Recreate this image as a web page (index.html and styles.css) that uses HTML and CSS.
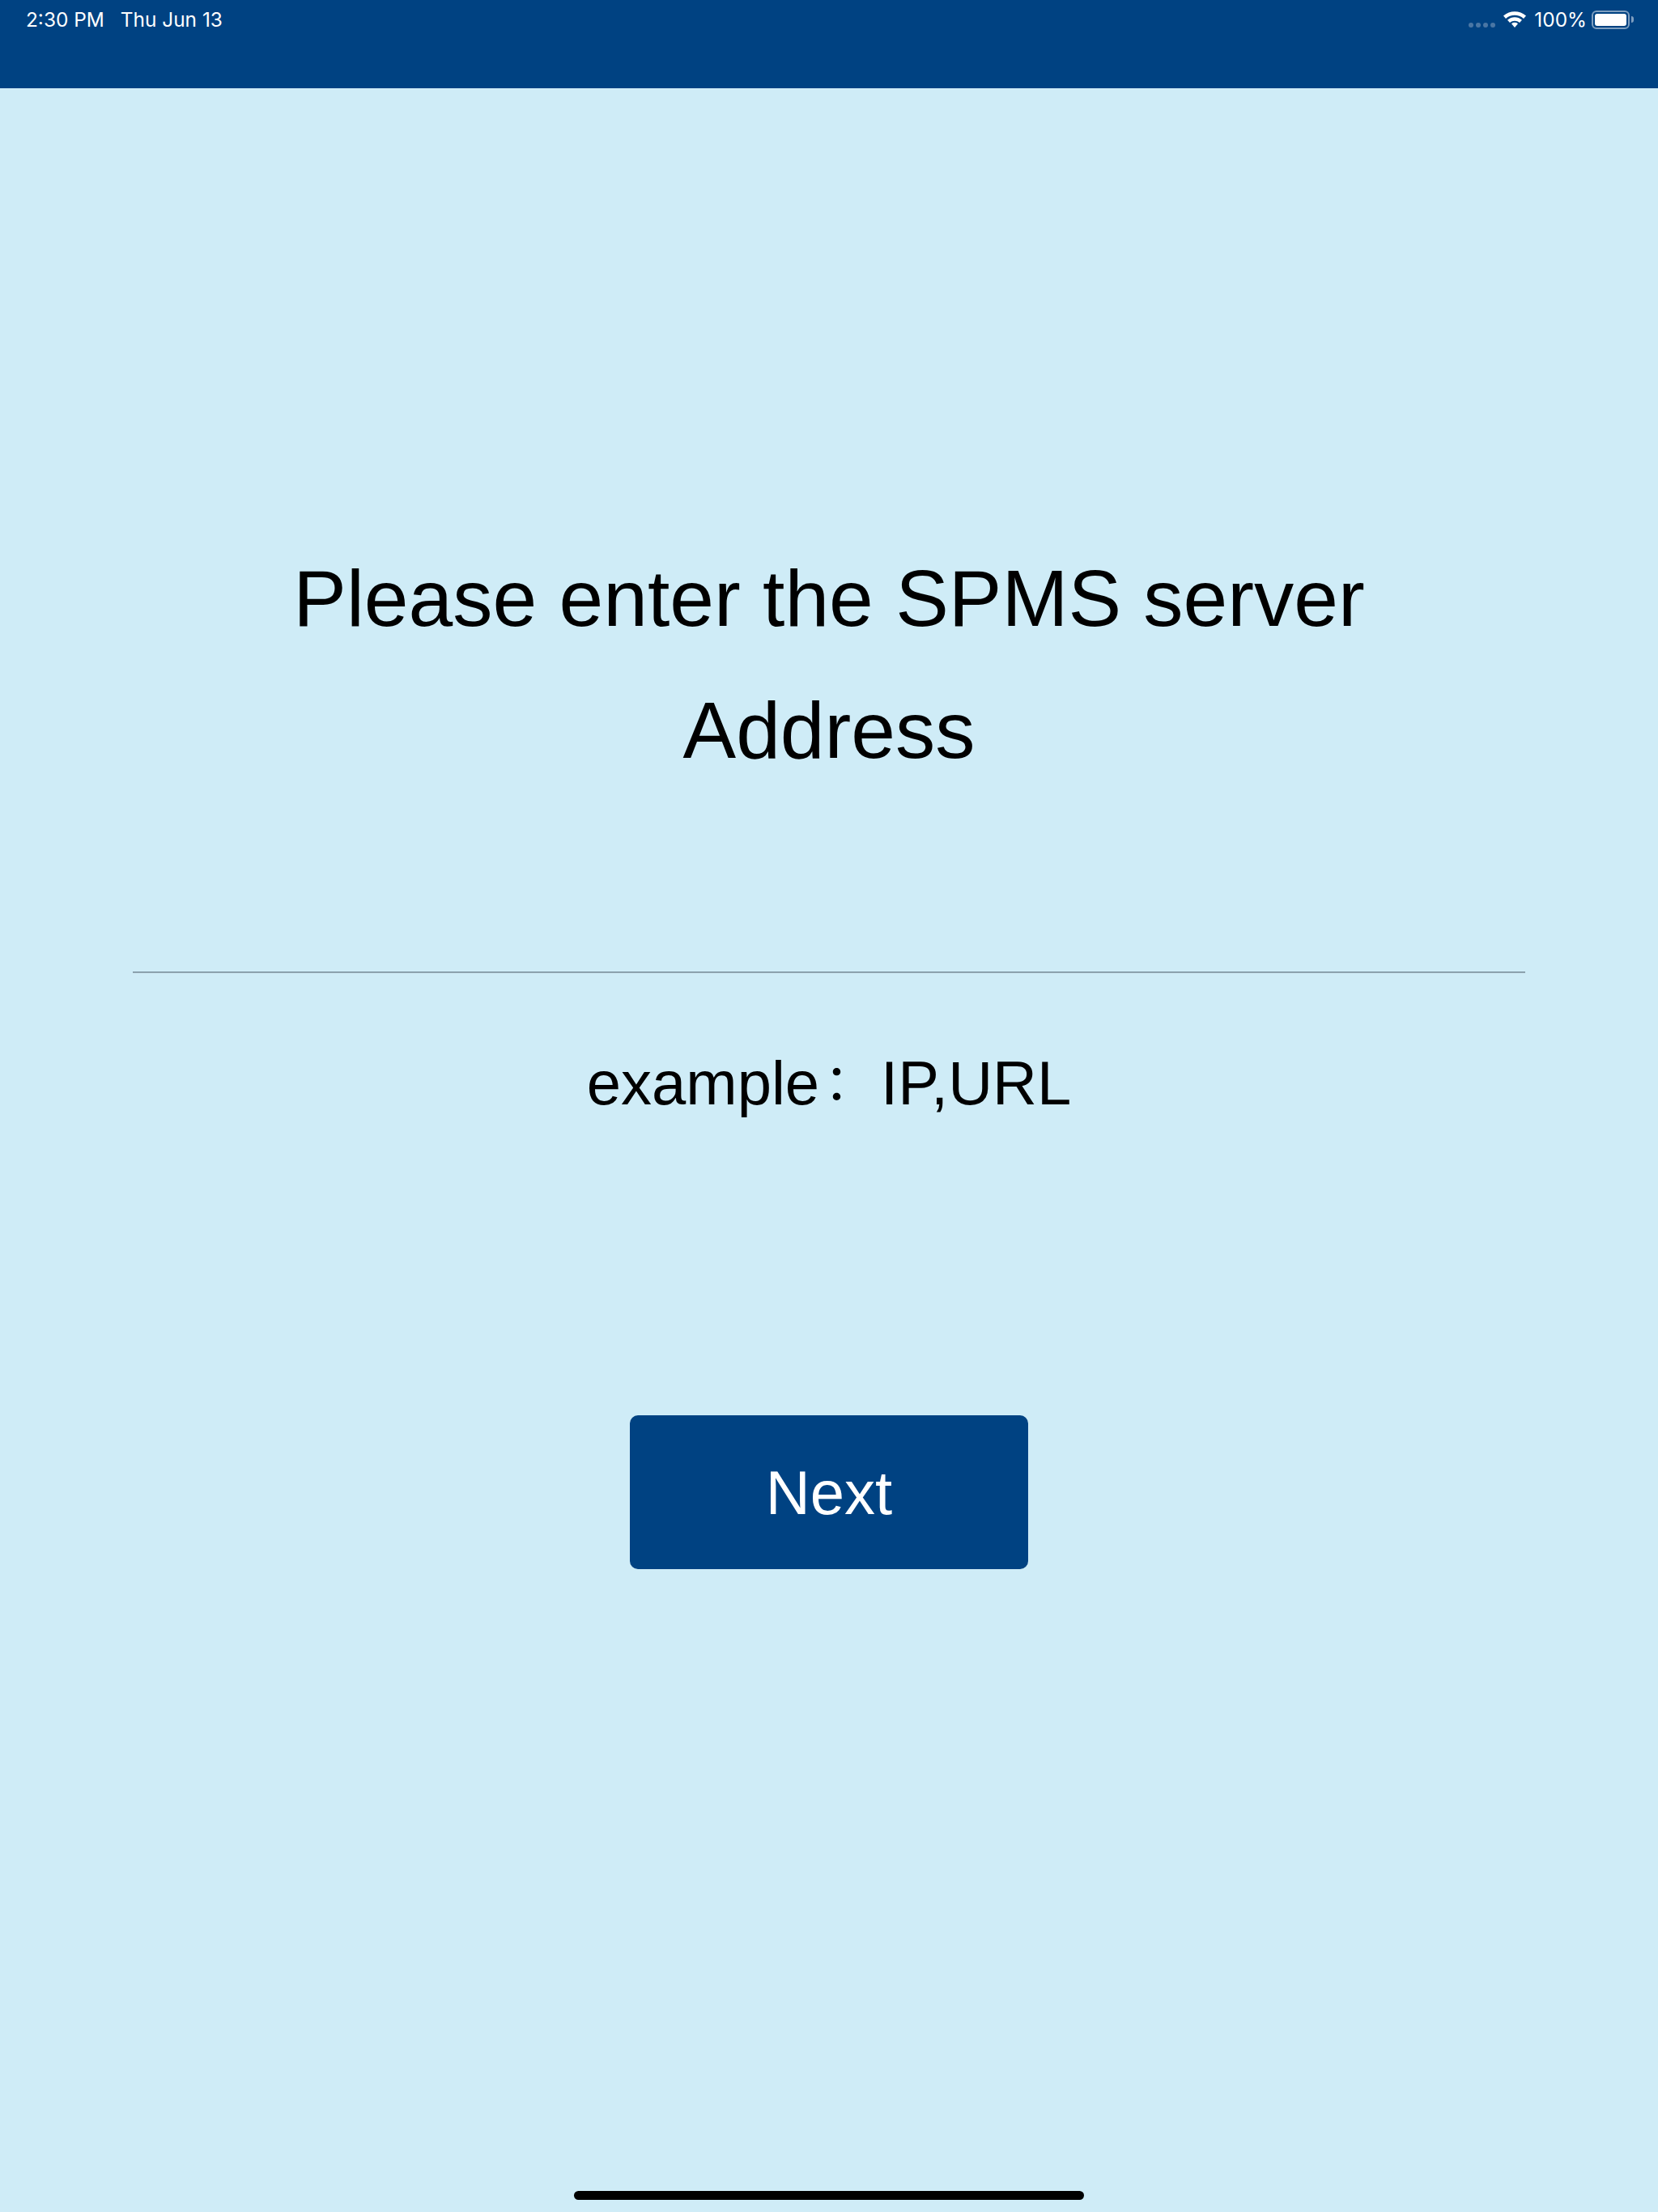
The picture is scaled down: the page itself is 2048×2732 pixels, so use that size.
FILE: index.html
```html
<!DOCTYPE html>
<html lang="en">

<head>
    <meta charset="UTF-8">
    <meta name="viewport" content="width=device-width, initial-scale=1.0">
    <title>SPMS server</title>
    <link rel="stylesheet" href="styles.css">
</head>

<body>
    <div class="container">
        <div class="topbar">
            <div class="status-left">
                <span>2:30 PM</span>
                <span>Thu Jun 13</span>
            </div>
            <div class="status-right">
                <div class="signal">
                    <i></i><i></i><i></i><i></i>
                </div>
                <svg class="wifi" viewBox="0 0 28 20" width="28" height="20">
                    <path d="M0 5.6 C8 -1.6 20 -1.6 28 5.6 L25 9 C18.6 3.4 9.4 3.4 3 9 Z" fill="#fff" />
                    <path d="M5 10.8 C10.4 6.2 17.6 6.2 23 10.8 L20 14 C16.4 11 11.6 11 8 14 Z" fill="#fff" />
                    <path d="M10 15.2 C12.4 13.4 15.6 13.4 18 15.2 L14 20 Z" fill="#fff" />
                </svg>
                <span class="percent">100%</span>
                <div class="battery">
                    <div class="battery-body">
                        <div class="battery-fill"></div>
                    </div>
                    <div class="battery-tip"></div>
                </div>
            </div>
        </div>

        <div class="content">
            <h1 class="title">Please enter the SPMS server<br>Address</h1>
            <div class="address">
                <div class="line"></div>
                <p class="example">example<span class="colon">：</span>IP,URL</p>
            </div>
            <button class="next">Next</button>
        </div>

        <div class="homebar"></div>
    </div>
</body>

</html>
```

FILE: styles.css
```css
* {
    box-sizing: border-box;
}

body {
    margin: 0;
    font-family: "Liberation Sans", "Noto Sans CJK SC", sans-serif;
}

.container {
    display: flex;
    flex-direction: column;
    height: 2732px;
    background-color: #cfecf7;
}

.topbar {
    display: flex;
    justify-content: space-between;
    align-items: flex-start;
    height: 109px;
    padding: 9px 30px 0 32px;
    background-color: #004282;
    color: #fff;
    font-family: Inter, sans-serif;
    font-size: 24.4px;
    line-height: 30px;
}

.status-left {
    display: flex;
    gap: 20px;
}

.status-right {
    display: flex;
    align-items: center;
}

.signal {
    display: flex;
    gap: 3px;
    margin: 13px 10px 0 0;
}

.signal i {
    width: 6px;
    height: 6px;
    border-radius: 50%;
    background-color: #4a76a4;
}

.wifi {
    margin-right: 10px;
}

.percent {
    margin-right: 6px;
}

.battery {
    display: flex;
    align-items: center;
}

.battery-body {
    width: 47px;
    height: 23px;
    padding: 2px;
    border: 2px solid #7f9fc0;
    border-radius: 6px;
}

.battery-fill {
    height: 100%;
    border-radius: 3px;
    background-color: #fff;
}

.battery-tip {
    width: 3px;
    height: 8px;
    margin-left: 2px;
    border-radius: 0 3px 3px 0;
    background-color: #7f9fc0;
}

.content {
    display: flex;
    flex-direction: column;
    align-items: center;
    flex: 1;
    padding: 0 164px;
}

.title {
    margin: 549px 0 0;
    font-size: 98.4px;
    font-weight: normal;
    line-height: 163px;
    text-align: center;
    white-space: nowrap;
    color: #000;
}

.address {
    width: 100%;
    margin-top: 216px;
}

.line {
    height: 2px;
    border-top: 1px solid #6e8591;
    border-bottom: 1px solid #a6bcc7;
}

.example {
    margin: 92px 0 0;
    font-size: 76px;
    line-height: 88px;
    text-align: center;
    color: #000;
}

.colon {
    display: inline-block;
    width: 76px;
    padding-left: 6px;
    font-size: 62px;
    line-height: 62px;
    text-align: left;
    vertical-align: 5px;
}

.next {
    width: 492px;
    height: 190px;
    margin-top: 366px;
    border: none;
    border-radius: 10px;
    background-color: #004282;
    color: #fff;
    font-family: inherit;
    font-size: 76px;
}

.homebar {
    width: 630px;
    height: 11px;
    margin: 0 auto 15px;
    border-radius: 6px;
    background-color: #000;
}
```
